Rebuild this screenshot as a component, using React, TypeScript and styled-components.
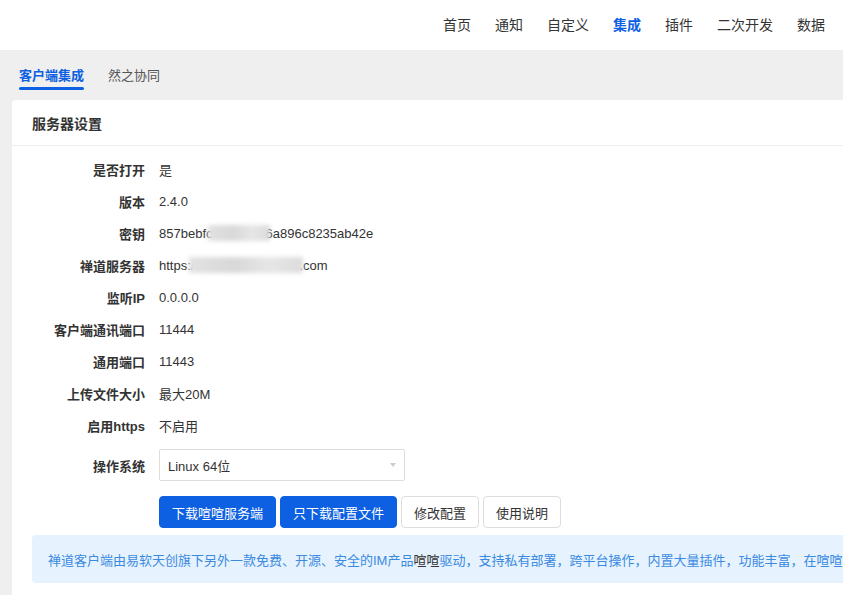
import styled, { createGlobalStyle } from 'styled-components';

const GlobalStyle = createGlobalStyle`
	html, body {
		margin: 0;
		padding: 0;
		overflow: hidden;
		background: #efefef;
	}
	body {
		font-family: "Liberation Sans", "Noto Sans CJK SC", sans-serif;
		font-size: 13px;
		color: #333;
	}
`;

const Page = styled.div`
	width: 843px;
	height: 595px;
	overflow: hidden;
	background: #efefef;
`;

const Header = styled.header`
	height: 50px;
	background: #fff;
	display: flex;
	justify-content: flex-end;
	align-items: center;
	padding-right: 18px;
	gap: 24px;
`;

const NavItem = styled.a<{ $active?: boolean }>`
	font-size: 14px;
	line-height: 20px;
	color: ${(p) => (p.$active ? '#0c60e1' : '#333')};
	font-weight: ${(p) => (p.$active ? 'bold' : 'normal')};
	text-decoration: none;
	cursor: pointer;
`;

const Tabs = styled.nav`
	height: 50px;
	display: flex;
	gap: 24px;
	padding-left: 19px;
`;

const Tab = styled.a<{ $active?: boolean }>`
	display: flex;
	align-items: center;
	height: 50px;
	box-sizing: border-box;
	padding-bottom: 1px;
	color: ${(p) => (p.$active ? '#0c60e1' : '#555')};
	font-weight: ${(p) => (p.$active ? 'bold' : 'normal')};
	position: relative;
	cursor: pointer;
	&::after {
		content: '';
		display: ${(p) => (p.$active ? 'block' : 'none')};
		position: absolute;
		left: 0;
		right: 0;
		top: 37px;
		height: 3px;
		border-radius: 2px;
		background: #0c60e1;
	}
`;

const Card = styled.section`
	margin-left: 12px;
	margin-right: -30px;
	background: #fff;
	border-radius: 4px 4px 0 0;
	min-height: 520px;
`;

const CardHeader = styled.div`
	height: 45px;
	border-bottom: 1px solid #eee;
	display: flex;
	align-items: center;
	padding-left: 20px;
	font-size: 14px;
	font-weight: bold;
	color: #333;
`;

const Form = styled.div`
	padding-top: 7px;
	display: flex;
	flex-direction: column;
`;

const Row = styled.div<{ $mt?: number; $h?: number }>`
	display: flex;
	align-items: center;
	height: ${(p) => p.$h ?? 32}px;
	margin-top: ${(p) => p.$mt ?? 0}px;
`;

const Label = styled.div`
	width: 133px;
	text-align: right;
	font-weight: bold;
	color: #333;
	flex-shrink: 0;
`;

const Value = styled.div`
	margin-left: 14px;
	color: #333;
	white-space: nowrap;
	display: flex;
	align-items: center;
`;

const Blur = styled.span<{ $w: number }>`
	display: inline-block;
	width: ${(p) => p.$w}px;
	height: 16px;
	background: linear-gradient(90deg, #e2e2e2, #d8d8d8 40%, #e6e6e6 70%, #dcdcdc);
	filter: blur(2px);
	margin: 0 -4px 0 -5px;
	position: relative;
`;

const Select = styled.div`
	margin-left: 14px;
	width: 246px;
	height: 32px;
	box-sizing: border-box;
	border: 1px solid #ddd;
	border-radius: 2px;
	display: flex;
	align-items: center;
	justify-content: space-between;
	padding: 0 8px 0 8px;
	color: #333;
	&::after {
		content: '';
		width: 0;
		height: 0;
		border-left: 3.5px solid transparent;
		border-right: 3.5px solid transparent;
		border-top: 4px solid #ccc;
		margin-right: 0;
	}
`;

const Buttons = styled.div`
	margin-left: 147px;
	margin-top: 14px;
	display: flex;
	gap: 4px;
`;

const Button = styled.button<{ $primary?: boolean }>`
	height: 32px;
	padding: 0 12px;
	font: inherit;
	font-size: 13px;
	border-radius: 4px;
	cursor: pointer;
	border: 1px solid ${(p) => (p.$primary ? '#0c60e1' : '#ddd')};
	background: ${(p) => (p.$primary ? '#0c60e1' : '#fff')};
	color: ${(p) => (p.$primary ? '#fff' : '#333')};
`;

const Alert = styled.div`
	margin: 7px 0 0 20px;
	height: 48px;
	border-radius: 4px;
	background: #e6f2fd;
	color: #3b8ae2;
	display: flex;
	align-items: center;
	padding-left: 16px;
	white-space: nowrap;
	overflow: hidden;
`;

const Dark = styled.span`
	color: #333;
`;

const rows: [string, React.ReactNode][] = [
	['是否打开', '是'],
	['版本', '2.4.0'],
	[
		'密钥',
		<>
			857bebfc
			<Blur $w={62} />
			6a896c8235ab42e
		</>,
	],
	[
		'禅道服务器',
		<>
			https:/
			<Blur $w={114} />
			.com
		</>,
	],
	['监听IP', '0.0.0.0'],
	['客户端通讯端口', '11444'],
	['通用端口', '11443'],
	['上传文件大小', '最大20M'],
	['启用https', '不启用'],
];

const navItems = ['首页', '通知', '自定义', '集成', '插件', '二次开发', '数据'];

export default function App() {
	return (
		<Page>
			<GlobalStyle />
			<Header>
				{navItems.map((item) => (
					<NavItem key={item} $active={item === '集成'}>
						{item}
					</NavItem>
				))}
			</Header>
			<Tabs>
				<Tab $active>客户端集成</Tab>
				<Tab>然之协同</Tab>
			</Tabs>
			<Card>
				<CardHeader>服务器设置</CardHeader>
				<Form>
					{rows.map(([label, value]) => (
						<Row key={label}>
							<Label>{label}</Label>
							<Value>{value}</Value>
						</Row>
					))}
					<Row $mt={7} $h={34}>
						<Label>操作系统</Label>
						<Select>Linux 64位</Select>
					</Row>
					<Buttons>
						<Button $primary>下载喧喧服务端</Button>
						<Button $primary>只下载配置文件</Button>
						<Button>修改配置</Button>
						<Button>使用说明</Button>
					</Buttons>
					<Alert>
						禅道客户端由易软天创旗下另外一款免费、开源、安全的IM产品<Dark>喧喧</Dark>
						驱动，支持私有部署，跨平台操作，内置大量插件，功能丰富，在喧喧的基础上与禅道深度集成。
					</Alert>
				</Form>
			</Card>
		</Page>
	);
}
